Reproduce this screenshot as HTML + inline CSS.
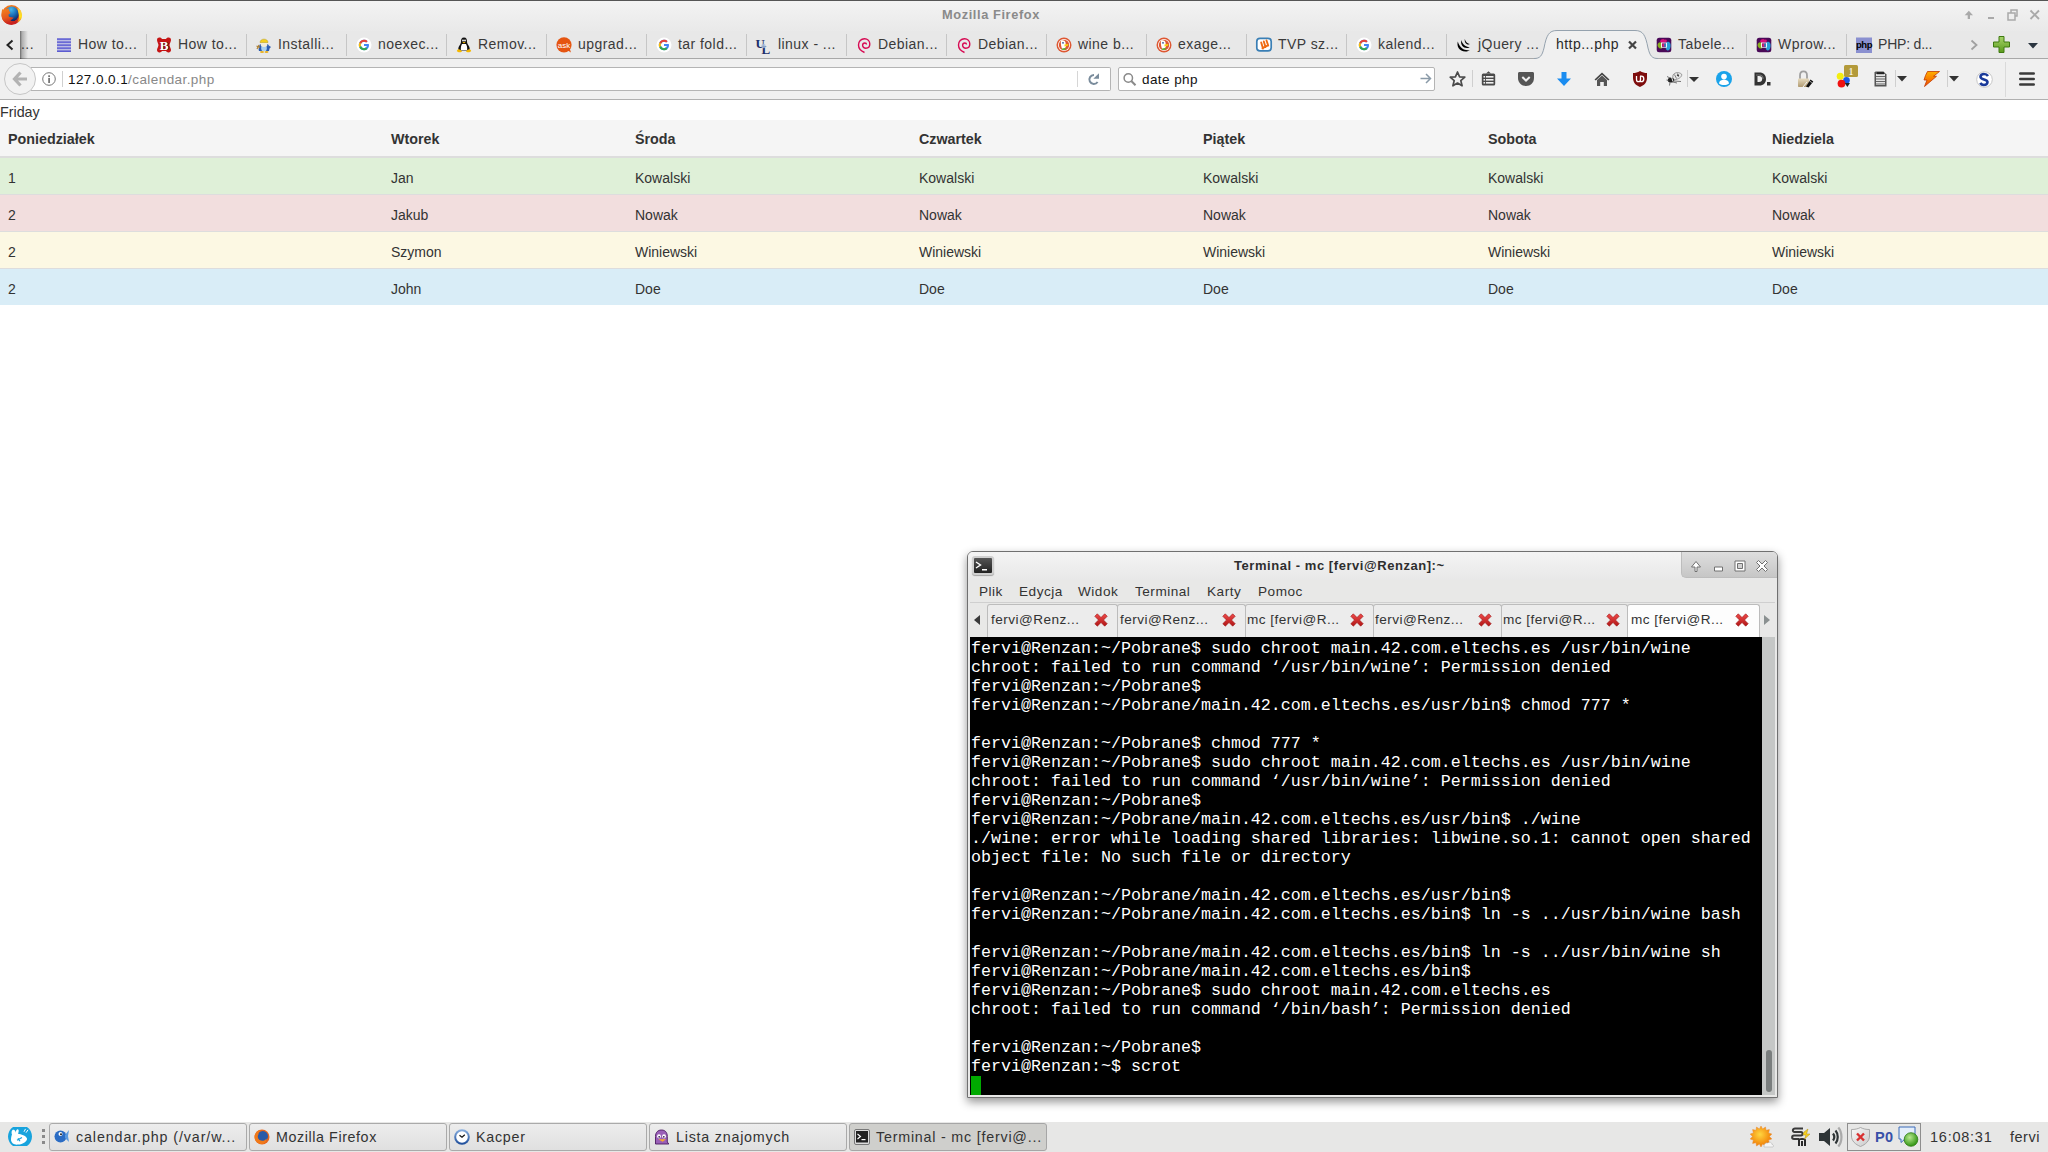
<!DOCTYPE html><html><head><meta charset="utf-8"><style>
*{margin:0;padding:0;box-sizing:border-box}
html,body{width:2048px;height:1152px;overflow:hidden;background:#fff;font-family:"Liberation Sans",sans-serif}
.a{position:absolute}
svg{position:absolute;overflow:visible}
#titlebar{left:0;top:0;width:2048px;height:31px;background:linear-gradient(#f3f3f3,#e9e9e9);border-top:1px solid #555}
#title{left:942px;top:7px;font-weight:bold;font-size:12.8px;letter-spacing:0.6px;color:#8a8a8a;white-space:nowrap}
#tabbar{left:0;top:31px;width:2048px;height:28px;background:#e8e8e8;border-bottom:1px solid #a8a8a8}
.sep{top:34px;width:1px;height:22px;background:#c6c6c6}
.tt{top:36px;font-size:14px;letter-spacing:0.45px;color:#3a3a3a;white-space:nowrap}
#navbar{left:0;top:59px;width:2048px;height:41px;background:#f0f0f0;border-bottom:1px solid #b0b0b0}
.nsep{width:1px;background:#cfcfcf}
#friday{left:0;top:104px;font-size:14.3px;color:#333}
table{position:absolute;left:0;top:120px;width:2048px;border-collapse:collapse;font-size:14.3px;color:#333;table-layout:fixed}
th,td{padding:10px 8px 6px 8px;line-height:20px;text-align:left;vertical-align:top;white-space:nowrap}
th{font-weight:bold;border-bottom:2px solid #ddd;background:#f5f5f5;padding-top:9px;padding-bottom:7px}
td{border-top:1px solid #ddd;font-size:14px}
tr.s td{background:#dff0d8}
tr.d td{background:#f2dede}
tr.w td{background:#fcf8e3}
tr.i td{background:#d9edf7}
#taskbar{left:0;top:1122px;width:2048px;height:30px;background:#e7e7e6}
.tb{top:1123px;height:28px;border:1px solid #aaa;border-radius:3px;background:linear-gradient(#ededed,#e0e0e0);font-size:14.4px;letter-spacing:0.5px;color:#333;white-space:nowrap;padding:5px 0 0 26px}
#term{left:967px;top:551px;width:811px;height:547px;background:#e8e8e7;border:1px solid #707070;border-radius:6px 6px 0 0}
#tscreen{left:970px;top:637px;width:792px;height:458px;background:#000;font-family:"Liberation Mono",monospace;font-size:16.67px;line-height:19px;color:#fff;white-space:pre;padding:2px 0 0 1px;overflow:hidden}
</style></head><body>
<div id="titlebar" class="a"></div>
<svg style="left:1px;top:4px" width="21" height="21" viewBox="0 0 21 21">
<defs><radialGradient id="ffb" cx="0.45" cy="0.2" r="0.8"><stop offset="0" stop-color="#45b8ea"/><stop offset="0.5" stop-color="#1a6fb8"/><stop offset="1" stop-color="#0d1e5a"/></radialGradient>
<linearGradient id="ffo" x1="0" y1="0" x2="0.3" y2="1"><stop offset="0" stop-color="#f5861e"/><stop offset="0.6" stop-color="#e55a1e"/><stop offset="1" stop-color="#c8221e"/></linearGradient>
<linearGradient id="ffy" x1="0" y1="0" x2="0" y2="1"><stop offset="0" stop-color="#f8c048"/><stop offset="0.6" stop-color="#ffe21a"/><stop offset="1" stop-color="#f08a1e"/></linearGradient></defs>
<circle cx="10.5" cy="11" r="10" fill="url(#ffo)"/>
<ellipse cx="10.8" cy="10" rx="7" ry="7.6" fill="url(#ffb)"/>
<path d="M16.5 3.5 C19.5 5 21 8 21 11.5 C21 15 19 17.5 16 18.5 C18 16 18.5 12 17.5 9 C17 7 16.5 5 16.5 3.5Z" fill="url(#ffy)"/>
<path d="M1.3 5 L3 6.5 C5 5 6.5 5 7.8 4.5 C7.5 6.5 9 7.5 9.5 9 L7.5 10.5 L7.8 12.5 C9 13.5 11.5 13 12.8 13.8 C11.5 15 10.5 15.5 9.5 16.5 C12 18 15.5 17 16.5 17.5 C14 20 10 21 6.5 20 C3 18.5 0.5 15 0.5 11 C0.5 8.5 0.8 6.8 1.3 5Z" fill="url(#ffo)"/>
</svg>
<div id="title" class="a">Mozilla Firefox</div>
<svg style="left:1960px;top:8px" width="82" height="14" viewBox="0 0 82 14">
<path d="M4.7 7.3 L8.85 2.8 L13 7.3 L10 7.3 L10 11 L7.7 11 L7.7 7.3Z" fill="#a9a9a9"/>
<rect x="28" y="9" width="6" height="2" fill="#a9a9a9"/>
<rect x="48" y="5" width="7" height="7" stroke="#a9a9a9" stroke-width="1.5" fill="none"/>
<path d="M51 5 V2 H57 V8 H55" stroke="#a9a9a9" stroke-width="1.5" fill="none"/>
<path d="M70.5 2.5 L79 11 M79 2.5 L70.5 11" stroke="#a9a9a9" stroke-width="1.9" fill="none"/>
</svg>
<div id="tabbar" class="a"></div>
<svg style="left:6px;top:40px" width="8" height="10" viewBox="0 0 8 10"><path d="M6.5 0.5 L1.5 5 L6.5 9.5" stroke="#222" stroke-width="2" fill="none"/></svg>
<div class="a" style="left:20px;top:31px;width:8px;height:28px;background:linear-gradient(90deg,rgba(0,0,0,.55),rgba(0,0,0,.25) 25%,rgba(0,0,0,0))"></div>
<div class="a tt" style="left:21px;width:14px;overflow:hidden">...</div>
<div class="a sep" style="left:46px"></div>
<svg style="left:56px;top:37px" width="16" height="16" viewBox="0 0 16 16"><g fill="#2020c8"><rect x="1" y="1.5" width="14" height="1.2"/><rect x="1" y="4.5" width="14" height="1.2"/><rect x="1" y="7.5" width="14" height="1.2"/><rect x="1" y="10.5" width="14" height="1.2"/><rect x="1" y="13.5" width="14" height="1.2"/></g><g fill="#9090e0"><rect x="1" y="2.7" width="14" height="0.8"/><rect x="1" y="5.7" width="14" height="0.8"/><rect x="1" y="8.7" width="14" height="0.8"/><rect x="1" y="11.7" width="14" height="0.8"/></g></svg>
<div class="a tt" style="left:78px">How to...</div>
<div class="a sep" style="left:146px"></div>
<svg style="left:156px;top:37px" width="16" height="16" viewBox="0 0 16 16"><path d="M1 3 C1 0 4.5 -0.2 6 2 L10 2 C11.5 -0.2 15 0 15 3 C15 4.5 14 5.5 13.5 8 C14 10.5 15 11.5 15 13 C15 16 11.5 16.2 10 14 L6 14 C4.5 16.2 1 16 1 13 C1 11.5 2 10.5 2.5 8 C2 5.5 1 4.5 1 3Z" fill="#c51414"/><text x="8.8" y="13.2" font-family="Liberation Serif" font-weight="bold" font-size="13" fill="#111" text-anchor="middle">B</text><text x="8" y="12.5" font-family="Liberation Serif" font-weight="bold" font-size="13" fill="#fff" text-anchor="middle">B</text></svg>
<div class="a tt" style="left:178px">How to...</div>
<div class="a sep" style="left:246px"></div>
<svg style="left:256px;top:37px" width="16" height="16" viewBox="0 0 16 16"><path d="M4 7 C3 10 2 12 3 14 L13 14 C14 12 13 10 12 7Z" fill="#2a5cb0"/><path d="M5.5 9 C5 11 5 12.5 6 14 L10 14 C11 12.5 11 11 10.5 9Z" fill="#a8d0f0"/><ellipse cx="8" cy="7" rx="3.5" ry="3" fill="#f0ecd8"/><path d="M4 5.5 C4 1 12 1 12 5.5Z" fill="#f2cf1c" stroke="#b89a10" stroke-width="0.5"/><path d="M0.5 9 L4 10.5 M1 12 L3 8" stroke="#b08030" stroke-width="1.2"/><ellipse cx="6" cy="15" rx="2" ry="1" fill="#e8b020"/><ellipse cx="10.5" cy="15" rx="2" ry="1" fill="#e8b020"/><path d="M12 8 L15 10 L13 12" fill="#2a5cb0"/></svg>
<div class="a tt" style="left:278px">Installi...</div>
<div class="a sep" style="left:346px"></div>
<svg style="left:356px;top:37px" width="16" height="16" viewBox="0 0 16 16"><circle cx="8" cy="8" r="7.5" fill="#fff"/>
<path d="M12.6 7 H8 V9 H10.8 C10.4 10.4 9.3 11.2 8 11.2 C6.2 11.2 4.8 9.8 4.8 8 C4.8 6.2 6.2 4.8 8 4.8 C8.9 4.8 9.6 5.1 10.2 5.6 L11.6 4.2 C10.7 3.3 9.4 2.8 8 2.8 C5.1 2.8 2.8 5.1 2.8 8 C2.8 10.9 5.1 13.2 8 13.2 C10.9 13.2 13 11.2 13 8 C13 7.6 12.9 7.3 12.6 7Z" fill="#4285f4"/>
<path d="M3.4 5.6 L5.1 6.9 C5.5 5.7 6.6 4.8 8 4.8 C8.9 4.8 9.6 5.1 10.2 5.6 L11.6 4.2 C10.7 3.3 9.4 2.8 8 2.8 C6 2.8 4.3 3.9 3.4 5.6Z" fill="#ea4335"/>
<path d="M3.4 10.4 L5.1 9.1 C4.9 8.8 4.8 8.4 4.8 8 C4.8 7.6 4.9 7.2 5.1 6.9 L3.4 5.6 C3 6.3 2.8 7.1 2.8 8 C2.8 8.9 3 9.7 3.4 10.4Z" fill="#fbbc05"/>
<path d="M8 13.2 C9.4 13.2 10.6 12.7 11.5 11.9 L9.8 10.6 C9.3 11 8.7 11.2 8 11.2 C6.6 11.2 5.5 10.3 5.1 9.1 L3.4 10.4 C4.3 12.1 6 13.2 8 13.2Z" fill="#34a853"/></svg>
<div class="a tt" style="left:378px">noexec...</div>
<div class="a sep" style="left:446px"></div>
<svg style="left:456px;top:37px" width="16" height="16" viewBox="0 0 16 16"><path d="M8 0.5 C5.5 0.5 5 2.5 5 4.5 C5 6 4.5 7 3.5 8.5 C2 10.5 2 13 3 14 L13 14 C14 13 14 10.5 12.5 8.5 C11.5 7 11 6 11 4.5 C11 2.5 10.5 0.5 8 0.5Z" fill="#111"/><path d="M6 7 C5 9 4.5 11 5 13.5 L11 13.5 C11.5 11 11 9 10 7Z" fill="#fff"/><circle cx="7" cy="3.5" r="0.9" fill="#fff"/><circle cx="9" cy="3.5" r="0.9" fill="#fff"/><path d="M6.3 5 L9.7 5 L8 6.5Z" fill="#f5b800"/><path d="M0.8 14 C1.5 11.5 4 11.5 6 14.2 C5.5 15.5 2 15.8 0.8 14Z M15.2 14 C14.5 11.5 12 11.5 10 14.2 C10.5 15.5 14 15.8 15.2 14Z" fill="#f5b800"/></svg>
<div class="a tt" style="left:478px">Remov...</div>
<div class="a sep" style="left:546px"></div>
<svg style="left:556px;top:37px" width="16" height="16" viewBox="0 0 16 16"><circle cx="8" cy="7.8" r="7.6" fill="#e55511"/><path d="M11 13 L15 15.5 L13.5 11Z" fill="#e55511"/><text x="8" y="10.5" font-family="Liberation Sans" font-size="8" fill="#fff" text-anchor="middle">ask</text></svg>
<div class="a tt" style="left:578px">upgrad...</div>
<div class="a sep" style="left:646px"></div>
<svg style="left:656px;top:37px" width="16" height="16" viewBox="0 0 16 16"><circle cx="8" cy="8" r="7.5" fill="#fff"/>
<path d="M12.6 7 H8 V9 H10.8 C10.4 10.4 9.3 11.2 8 11.2 C6.2 11.2 4.8 9.8 4.8 8 C4.8 6.2 6.2 4.8 8 4.8 C8.9 4.8 9.6 5.1 10.2 5.6 L11.6 4.2 C10.7 3.3 9.4 2.8 8 2.8 C5.1 2.8 2.8 5.1 2.8 8 C2.8 10.9 5.1 13.2 8 13.2 C10.9 13.2 13 11.2 13 8 C13 7.6 12.9 7.3 12.6 7Z" fill="#4285f4"/>
<path d="M3.4 5.6 L5.1 6.9 C5.5 5.7 6.6 4.8 8 4.8 C8.9 4.8 9.6 5.1 10.2 5.6 L11.6 4.2 C10.7 3.3 9.4 2.8 8 2.8 C6 2.8 4.3 3.9 3.4 5.6Z" fill="#ea4335"/>
<path d="M3.4 10.4 L5.1 9.1 C4.9 8.8 4.8 8.4 4.8 8 C4.8 7.6 4.9 7.2 5.1 6.9 L3.4 5.6 C3 6.3 2.8 7.1 2.8 8 C2.8 8.9 3 9.7 3.4 10.4Z" fill="#fbbc05"/>
<path d="M8 13.2 C9.4 13.2 10.6 12.7 11.5 11.9 L9.8 10.6 C9.3 11 8.7 11.2 8 11.2 C6.6 11.2 5.5 10.3 5.1 9.1 L3.4 10.4 C4.3 12.1 6 13.2 8 13.2Z" fill="#34a853"/></svg>
<div class="a tt" style="left:678px">tar fold...</div>
<div class="a sep" style="left:746px"></div>
<svg style="left:756px;top:37px" width="16" height="16" viewBox="0 0 16 16"><text x="-0.5" y="10.5" font-family="Liberation Serif" font-weight="bold" font-size="13" fill="#1d2f6a">U</text><text x="5.5" y="16.5" font-family="Liberation Serif" font-weight="bold" font-size="13" fill="#1d2f6a">L</text><circle cx="7.5" cy="9" r="2.2" fill="#a8bedc" opacity=".8"/></svg>
<div class="a tt" style="left:778px">linux - ...</div>
<div class="a sep" style="left:846px"></div>
<svg style="left:856px;top:37px" width="16" height="16" viewBox="0 0 16 16"><path d="M8.5 15.5 C5 14 2.5 11.5 2.5 8 C2.5 4.5 5 1.8 8.5 1.8 C11.5 1.8 13.8 4 13.8 7 C13.8 9.5 12 11.2 9.8 11.2 C8 11.2 6.6 10 6.6 8.3 C6.6 7 7.6 6 8.8 6 C9.8 6 10.5 6.7 10.5 7.5" stroke="#d70a53" stroke-width="1.4" fill="none"/></svg>
<div class="a tt" style="left:878px">Debian...</div>
<div class="a sep" style="left:946px"></div>
<svg style="left:956px;top:37px" width="16" height="16" viewBox="0 0 16 16"><path d="M8.5 15.5 C5 14 2.5 11.5 2.5 8 C2.5 4.5 5 1.8 8.5 1.8 C11.5 1.8 13.8 4 13.8 7 C13.8 9.5 12 11.2 9.8 11.2 C8 11.2 6.6 10 6.6 8.3 C6.6 7 7.6 6 8.8 6 C9.8 6 10.5 6.7 10.5 7.5" stroke="#d70a53" stroke-width="1.4" fill="none"/></svg>
<div class="a tt" style="left:978px">Debian...</div>
<div class="a sep" style="left:1046px"></div>
<svg style="left:1056px;top:37px" width="16" height="16" viewBox="0 0 16 16"><circle cx="8" cy="8" r="7.5" fill="#de5833"/><circle cx="8" cy="8" r="6" fill="#fff"/><circle cx="8" cy="8" r="5.2" fill="#de5833"/>
<path d="M5 3.5 C7 2.8 9 3.5 9.5 5.5 L10 10 L6.5 12.5 C5 10 4.5 6 5 3.5Z" fill="#fff"/>
<path d="M8.5 7.5 L12.5 7 L11.5 9 L8.5 9.5Z" fill="#fdd20a"/><circle cx="7" cy="5.8" r="0.9" fill="#2d4f8e"/>
<path d="M6 11.5 L9.5 11 L9.5 12.8 L6.3 13Z" fill="#4cba3c"/></svg>
<div class="a tt" style="left:1078px">wine b...</div>
<div class="a sep" style="left:1146px"></div>
<svg style="left:1156px;top:37px" width="16" height="16" viewBox="0 0 16 16"><circle cx="8" cy="8" r="7.5" fill="#de5833"/><circle cx="8" cy="8" r="6" fill="#fff"/><circle cx="8" cy="8" r="5.2" fill="#de5833"/>
<path d="M5 3.5 C7 2.8 9 3.5 9.5 5.5 L10 10 L6.5 12.5 C5 10 4.5 6 5 3.5Z" fill="#fff"/>
<path d="M8.5 7.5 L12.5 7 L11.5 9 L8.5 9.5Z" fill="#fdd20a"/><circle cx="7" cy="5.8" r="0.9" fill="#2d4f8e"/>
<path d="M6 11.5 L9.5 11 L9.5 12.8 L6.3 13Z" fill="#4cba3c"/></svg>
<div class="a tt" style="left:1178px">exage...</div>
<div class="a sep" style="left:1246px"></div>
<svg style="left:1256px;top:37px" width="16" height="16" viewBox="0 0 16 16"><rect x="0.8" y="1.3" width="14.4" height="12.6" rx="3.2" fill="#fff" stroke="#3a7fb5" stroke-width="1.7"/><path d="M5.2 5.5 L7 11.5 M7.8 4.5 L9.5 10 M10.5 3.5 L12.2 8.5 M6.5 11.2 L12 8.3" stroke="#f06a12" stroke-width="1.9" stroke-linecap="round" fill="none"/></svg>
<div class="a tt" style="left:1278px">TVP sz...</div>
<div class="a sep" style="left:1346px"></div>
<svg style="left:1356px;top:37px" width="16" height="16" viewBox="0 0 16 16"><circle cx="8" cy="8" r="7.5" fill="#fff"/>
<path d="M12.6 7 H8 V9 H10.8 C10.4 10.4 9.3 11.2 8 11.2 C6.2 11.2 4.8 9.8 4.8 8 C4.8 6.2 6.2 4.8 8 4.8 C8.9 4.8 9.6 5.1 10.2 5.6 L11.6 4.2 C10.7 3.3 9.4 2.8 8 2.8 C5.1 2.8 2.8 5.1 2.8 8 C2.8 10.9 5.1 13.2 8 13.2 C10.9 13.2 13 11.2 13 8 C13 7.6 12.9 7.3 12.6 7Z" fill="#4285f4"/>
<path d="M3.4 5.6 L5.1 6.9 C5.5 5.7 6.6 4.8 8 4.8 C8.9 4.8 9.6 5.1 10.2 5.6 L11.6 4.2 C10.7 3.3 9.4 2.8 8 2.8 C6 2.8 4.3 3.9 3.4 5.6Z" fill="#ea4335"/>
<path d="M3.4 10.4 L5.1 9.1 C4.9 8.8 4.8 8.4 4.8 8 C4.8 7.6 4.9 7.2 5.1 6.9 L3.4 5.6 C3 6.3 2.8 7.1 2.8 8 C2.8 8.9 3 9.7 3.4 10.4Z" fill="#fbbc05"/>
<path d="M8 13.2 C9.4 13.2 10.6 12.7 11.5 11.9 L9.8 10.6 C9.3 11 8.7 11.2 8 11.2 C6.6 11.2 5.5 10.3 5.1 9.1 L3.4 10.4 C4.3 12.1 6 13.2 8 13.2Z" fill="#34a853"/></svg>
<div class="a tt" style="left:1378px">kalend...</div>
<div class="a sep" style="left:1446px"></div>
<svg style="left:1456px;top:37px" width="16" height="16" viewBox="0 0 16 16"><path d="M1.8 4.5 C0.5 9 3 14.5 9.5 14.5 C11.5 14.5 13 13.8 13.8 13 C9.5 14 4 12 1.8 4.5Z" fill="#000"/><path d="M5.3 3 C4.2 7.5 7 11 11 11 C12.3 11 13.2 10.5 13.8 10 C10.5 10.3 6.5 8 5.3 3Z" fill="#000"/><path d="M8.8 2 C8.3 5 10 7.5 12.5 7.5 C13.2 7.5 13.6 7.3 13.8 7 C11.5 6.8 9.5 5 8.8 2Z" fill="#000"/></svg>
<div class="a tt" style="left:1478px">jQuery ...</div>
<svg style="left:1656px;top:37px" width="16" height="16" viewBox="0 0 16 16"><rect x="0.7" y="0.7" width="14.6" height="14.6" rx="2.5" fill="#4a0a58"/><path d="M4 4.5 C5 1.5 8 1.5 9 3 C10 2 11.5 3 10.5 5 L5.5 6Z" fill="#d8107a"/><path d="M1.5 8 C2 5.5 4 4.5 5.5 6 L6 11.5 C4 12 2 11 1.5 8Z" fill="#88b020"/><path d="M10 6 C12 3.5 14 5 14.5 7 C15 10 14 13 12 13.5 C10 13.5 9 11 10 6Z" fill="#2aa0d8"/><rect x="5.5" y="6" width="5" height="4.2" fill="none" stroke="#fff" stroke-width="0.9"/><rect x="6.3" y="6.8" width="2" height="2.6" fill="#d8207a"/><rect x="8.3" y="6.8" width="1.5" height="2.6" fill="#3a8ad0"/></svg>
<div class="a tt" style="left:1678px">Tabele...</div>
<div class="a sep" style="left:1746px"></div>
<svg style="left:1756px;top:37px" width="16" height="16" viewBox="0 0 16 16"><rect x="0.7" y="0.7" width="14.6" height="14.6" rx="2.5" fill="#4a0a58"/><path d="M4 4.5 C5 1.5 8 1.5 9 3 C10 2 11.5 3 10.5 5 L5.5 6Z" fill="#d8107a"/><path d="M1.5 8 C2 5.5 4 4.5 5.5 6 L6 11.5 C4 12 2 11 1.5 8Z" fill="#88b020"/><path d="M10 6 C12 3.5 14 5 14.5 7 C15 10 14 13 12 13.5 C10 13.5 9 11 10 6Z" fill="#2aa0d8"/><rect x="5.5" y="6" width="5" height="4.2" fill="none" stroke="#fff" stroke-width="0.9"/><rect x="6.3" y="6.8" width="2" height="2.6" fill="#d8207a"/><rect x="8.3" y="6.8" width="1.5" height="2.6" fill="#3a8ad0"/></svg>
<div class="a tt" style="left:1778px">Wprow...</div>
<div class="a sep" style="left:1846px"></div>
<svg style="left:1856px;top:37px" width="16" height="16" viewBox="0 0 16 16"><rect x="0" y="0.5" width="16" height="15.5" fill="#8a90d0"/><text x="8" y="11.3" font-family="Liberation Sans" font-weight="bold" font-size="9.5" fill="#000" text-anchor="middle" letter-spacing="-0.5">php</text></svg>
<div class="a tt" style="left:1878px;letter-spacing:-0.2px">PHP: d...</div>
<svg style="left:1534px;top:30px" width="124" height="30" viewBox="0 0 124 30">
<path d="M0 28.5 C6 28.5 8 26 10 18 C12.5 5 15 0.5 23 0.5 L101 0.5 C109 0.5 111.5 5 114 18 C116 26 118 28.5 124 28.5 L124 30 L0 30Z" fill="#f0f0f0"/>
<path d="M0 28.5 C6 28.5 8 26 10 18 C12.5 5 15 0.5 23 0.5 L101 0.5 C109 0.5 111.5 5 114 18 C116 26 118 28.5 124 28.5" fill="none" stroke="#95a2ae" stroke-width="1"/>
</svg>
<div class="a tt" style="left:1556px;color:#2a2a2a">http...php</div>
<svg style="left:1628px;top:41px" width="9" height="8" viewBox="0 0 9 8"><path d="M1 0.5 L8 7.5 M8 0.5 L1 7.5" stroke="#444" stroke-width="2.2"/></svg>
<svg style="left:1970px;top:40px" width="8" height="10" viewBox="0 0 8 10"><path d="M1.5 0.5 L6.5 5 L1.5 9.5" stroke="#a0a0a0" stroke-width="1.8" fill="none"/></svg>
<svg style="left:1993px;top:36px" width="17" height="17" viewBox="0 0 17 17"><defs><linearGradient id="gp" x1="0" y1="0" x2="0" y2="1"><stop offset="0" stop-color="#a6d36a"/><stop offset="1" stop-color="#5a9a1c"/></linearGradient></defs>
<path d="M6 0.5 H11 V6 H16.5 V11 H11 V16.5 H6 V11 H0.5 V6 H6Z" fill="url(#gp)" stroke="#3e7a10" stroke-width="1"/></svg>
<svg style="left:2028px;top:43px" width="10" height="6" viewBox="0 0 10 6"><path d="M0 0 H10 L5 5.5Z" fill="#2a3540"/></svg>
<div id="navbar" class="a"></div>
<div class="a" style="left:31px;top:67px;width:1080px;height:24px;background:#fff;border:1px solid #b4b4b4;border-left:none;border-radius:0 2px 2px 0"></div>
<div class="a" style="left:4px;top:63px;width:32px;height:32px;border-radius:50%;background:#f2f2f2;border:1px solid #c6c6c6"></div>
<svg style="left:13px;top:71px" width="15" height="16" viewBox="0 0 15 16"><path d="M7.5 1.5 L1.5 8 L7.5 14.5 M2 8 H14" stroke="#b3b3b3" stroke-width="3.2" fill="none"/></svg>
<svg style="left:42px;top:72px" width="15" height="15" viewBox="0 0 15 15"><circle cx="7" cy="7" r="6.3" fill="none" stroke="#777" stroke-width="1"/><rect x="6.2" y="6" width="1.8" height="5" fill="#777"/><rect x="6.2" y="3.3" width="1.8" height="1.8" fill="#777"/></svg>
<div class="a nsep" style="left:62px;top:71px;height:16px;background:#d0d0d0"></div>
<div class="a" style="left:68px;top:72px;font-size:13.5px;letter-spacing:0.42px;color:#111;white-space:nowrap">127.0.0.1<span style="color:#888">/calendar.php</span></div>
<div class="a nsep" style="left:1077px;top:71px;height:16px;background:#d6d6d6"></div>
<svg style="left:1087px;top:72px" width="14" height="14" viewBox="0 0 14 14"><path d="M7 3 A4.5 4.5 0 1 0 10.6 10" stroke="#7a8c9c" stroke-width="2" fill="none"/><path d="M12 1.2 V6.8 H6.3Z" fill="#7a8c9c"/></svg>
<div class="a" style="left:1118px;top:67px;width:317px;height:24px;background:#fff;border:1px solid #b4b4b4;border-radius:2px"></div>
<svg style="left:1123px;top:73px" width="14" height="14" viewBox="0 0 14 14"><circle cx="5.3" cy="5" r="4.2" stroke="#8a8a8a" stroke-width="1.5" fill="none"/><path d="M8.3 8 L12.5 12.3" stroke="#8a8a8a" stroke-width="2"/></svg>
<div class="a" style="left:1142px;top:72px;font-size:13.5px;letter-spacing:0.42px;color:#111;white-space:nowrap">date php</div>
<svg style="left:1420px;top:73px" width="12" height="11" viewBox="0 0 12 11"><path d="M0.5 5.5 H10.5 M6 1 L10.5 5.5 L6 10" stroke="#8a9aa8" stroke-width="1.5" fill="none"/></svg>
<svg style="left:1449px;top:71px" width="17" height="16" viewBox="0 0 17 16"><path d="M8.5 1 L10.6 5.8 L15.8 6.2 L11.8 9.6 L13.1 14.8 L8.5 12 L3.9 14.8 L5.2 9.6 L1.2 6.2 L6.4 5.8Z" fill="none" stroke="#4a4a4a" stroke-width="1.7" stroke-linejoin="round"/></svg>
<div class="a nsep" style="left:1472px;top:70px;height:17px"></div>
<svg style="left:1481px;top:71px" width="15" height="15" viewBox="0 0 15 15"><path d="M5 2.5 L7.5 0.3 L10 2.5" fill="#4a4a4a"/><rect x="0.8" y="2.5" width="13.4" height="12" rx="1.5" fill="#4a4a4a"/><g fill="#f0f0f0"><rect x="2.5" y="5" width="1.6" height="1.6"/><rect x="5" y="5" width="7.5" height="1.6"/><rect x="2.5" y="8" width="1.6" height="1.6"/><rect x="5" y="8" width="7.5" height="1.6"/><rect x="2.5" y="11" width="1.6" height="1.6"/><rect x="5" y="11" width="7.5" height="1.6"/></g></svg>
<svg style="left:1518px;top:72px" width="16" height="14" viewBox="0 0 16 14"><path d="M0 1.5 C0 0.5 0.7 0 1.5 0 H14.5 C15.3 0 16 0.5 16 1.5 V6 C16 10.5 12.5 14 8 14 C3.5 14 0 10.5 0 6Z" fill="#555"/><path d="M4.3 5 L8 8.5 L11.7 5" stroke="#f0f0f0" stroke-width="2" fill="none"/></svg>
<svg style="left:1557px;top:72px" width="14" height="14" viewBox="0 0 14 14"><path d="M4.5 0 H9.5 V6.5 H14 L7 14 L0 6.5 H4.5Z" fill="#1a8cf0"/></svg>
<svg style="left:1594px;top:72px" width="16" height="14" viewBox="0 0 16 14"><path d="M8 0.5 L15.5 7.5 L14.2 8.5 L8 2.8 L1.8 8.5 L0.5 7.5Z" fill="#444"/><path d="M3 8 L8 3.5 L13 8 V14 H9.8 V10 H6.2 V14 H3Z" fill="#555"/></svg>
<svg style="left:1633px;top:71px" width="14" height="16" viewBox="0 0 14 16"><path d="M7 0 C9.5 1.5 11.5 2 14 2 V7 C14 11.5 11 14.5 7 16 C3 14.5 0 11.5 0 7 V2 C2.5 2 4.5 1.5 7 0Z" fill="#7e0d0d"/><path d="M3.5 5 V8.5 C3.5 10 4.3 10.7 5.5 10.7 C6.7 10.7 7.5 10 7.5 8.5 V5 M7 5.2 H8.2 C10 5.2 10.8 6.5 10.8 8 C10.8 9.5 10 10.7 8.2 10.7 H7.2" stroke="#fff" stroke-width="1.3" fill="none"/></svg>
<svg style="left:1666px;top:72px" width="17" height="14" viewBox="0 0 17 14"><path d="M7 3 C9 0 13 0 15.5 2 C16.5 4 14 6.5 10 7.5 L6.5 8Z" fill="#e8e8e8" stroke="#777" stroke-width="0.7"/><path d="M8.5 2.5 L10.5 6.5 M11.5 1.5 L12.5 5" stroke="#555" stroke-width="0.7"/><ellipse cx="5" cy="8" rx="3.2" ry="2.6" fill="#222"/><ellipse cx="12" cy="3.2" rx="1.2" ry="0.8" fill="#333"/><path d="M1 4.5 L4 6 M0.5 8 L2.5 8.5 M4 10.5 L3.5 13.5 M8 9 L15 9.5 M7 10 L11 11" stroke="#555" stroke-width="0.8"/><path d="M5.5 5 L7 9.5" stroke="#fff" stroke-width="0.9"/></svg>
<div class="a nsep" style="left:1687px;top:70px;height:17px"></div>
<svg style="left:1689px;top:77px" width="10" height="5" viewBox="0 0 10 5"><path d="M0 0 H10 L5 5Z" fill="#333"/></svg>
<svg style="left:1716px;top:71px" width="16" height="16" viewBox="0 0 16 16"><circle cx="8" cy="8" r="8" fill="#1aa3ea"/><circle cx="8" cy="5.6" r="2.8" fill="#fff"/><path d="M3 12.5 C3.5 9.5 5.5 8.8 8 8.8 C10.5 8.8 12.5 9.5 13 12.5 C11.5 13.7 10 14 8 14 C6 14 4.5 13.7 3 12.5Z" fill="#fff"/></svg>
<svg style="left:1754px;top:72px" width="17" height="14" viewBox="0 0 17 14"><path d="M0.5 0.5 H5.5 C9.5 0.5 12 3 12 7 C12 11 9.5 13.5 5.5 13.5 H0.5 V10 H5 C7 10 8.2 8.8 8.2 7 C8.2 5.2 7 4 5 4 H3.5 V10 H0.5Z" fill="#333"/><path d="M2 3 H5 C7.5 3 9 4.8 9 7" stroke="#777" stroke-width="1.2" fill="none"/><rect x="13" y="10" width="3.5" height="3.5" fill="#333"/></svg>
<svg style="left:1797px;top:70px" width="17" height="18" viewBox="0 0 17 18"><defs><linearGradient id="lk" x1="0" y1="0" x2="0" y2="1"><stop offset="0" stop-color="#e8dcc0"/><stop offset="1" stop-color="#b09a70"/></linearGradient></defs><path d="M3 9 V5.5 C3 2.8 4.6 1.3 6.5 1.3 C8.4 1.3 10 2.8 10 5.5 V9" stroke="#a0a0a0" stroke-width="1.8" fill="none"/><rect x="1" y="8.5" width="11" height="8.5" rx="0.8" fill="url(#lk)"/><path d="M9 16.5 L13.5 9.5 L16.3 11.5 L11.5 17.5Z" fill="#111"/><path d="M12.5 11 L14.8 12.6" stroke="#ddd" stroke-width="0.8"/><path d="M6 17 L10 12" stroke="#f4f4f4" stroke-width="1"/></svg>
<svg style="left:1836px;top:65px" width="23" height="23" viewBox="0 0 23 23"><circle cx="4.2" cy="11.3" r="3.5" fill="#f4ee10"/><circle cx="10.5" cy="15.2" r="3.3" fill="#1a5ae8"/><circle cx="5.5" cy="18.6" r="3.9" fill="#f01010"/><path d="M8.7 18 H14 L11.35 22Z" fill="#222"/>
<rect x="8" y="0" width="14" height="12" rx="1.5" fill="#b39a3a"/><text x="15" y="10" font-family="Liberation Serif" font-size="11" fill="#fff" text-anchor="middle">1</text></svg>
<svg style="left:1874px;top:71px" width="13" height="16" viewBox="0 0 13 16"><path d="M1.5 0.5 H9.5 L12.5 3.5 V15.5 H0.5 V1.5Z" fill="#555" /><rect x="2" y="3" width="9" height="11" fill="#e4e4e4"/><g stroke="#666" stroke-width="1"><path d="M2 5.5 H11 M2 8 H11 M2 10.5 H11 M2 13 H11"/></g><rect x="3" y="1.2" width="7" height="2" fill="#222"/></svg>
<div class="a nsep" style="left:1895px;top:70px;height:17px"></div>
<svg style="left:1897px;top:76px" width="10" height="6" viewBox="0 0 10 6"><path d="M0 0 H10 L5 5.5Z" fill="#333"/></svg>
<svg style="left:1923px;top:71px" width="17" height="16" viewBox="0 0 17 16"><defs><linearGradient id="lg" x1="0" y1="0" x2="0" y2="1"><stop offset="0" stop-color="#ffb000"/><stop offset="1" stop-color="#f04a00"/></linearGradient></defs>
<path d="M4.5 0.5 H16.5 L10.5 5.3 H13.5 L1.5 15.5 L4 9 H1 L2.5 4.5Z" fill="url(#lg)" stroke="#c03800" stroke-width="0.8" stroke-linejoin="round"/></svg>
<div class="a nsep" style="left:1947px;top:70px;height:17px"></div>
<svg style="left:1949px;top:76px" width="10" height="6" viewBox="0 0 10 6"><path d="M0 0 H10 L5 5.5Z" fill="#333"/></svg>
<svg style="left:1976px;top:71px" width="17" height="17" viewBox="0 0 17 17"><circle cx="8.5" cy="8.5" r="7.8" fill="#fff" stroke="#bbb" stroke-width="0.8"/><path d="M12 5 C11 3.5 9.5 3 8 3 C5.8 3 4.5 4.2 4.5 5.8 C4.5 9 11.5 7.8 11.5 11 C11.5 12.8 10 14 8 14 C6.3 14 5 13.3 4.2 12" stroke="#1a3a9a" stroke-width="2.6" fill="none"/></svg>
<div class="a nsep" style="left:2005px;top:62px;height:35px;background:#dadada"></div>
<svg style="left:2019px;top:72px" width="16" height="14" viewBox="0 0 16 14"><g stroke="#3a3a3a" stroke-width="2.6" stroke-linecap="round"><path d="M1.3 1.5 H14.7 M1.3 7 H14.7 M1.3 12.5 H14.7"/></g></svg>
<div id="friday" class="a">Friday</div>
<table>
<colgroup><col style="width:383px"><col style="width:244px"><col style="width:284px"><col style="width:284px"><col style="width:285px"><col style="width:284px"><col></colgroup>
<tr><th>Poniedziałek</th><th>Wtorek</th><th>Środa</th><th>Czwartek</th><th>Piątek</th><th>Sobota</th><th>Niedziela</th></tr>
<tr class="s"><td>1</td><td>Jan</td><td>Kowalski</td><td>Kowalski</td><td>Kowalski</td><td>Kowalski</td><td>Kowalski</td></tr>
<tr class="d"><td>2</td><td>Jakub</td><td>Nowak</td><td>Nowak</td><td>Nowak</td><td>Nowak</td><td>Nowak</td></tr>
<tr class="w"><td>2</td><td>Szymon</td><td>Winiewski</td><td>Winiewski</td><td>Winiewski</td><td>Winiewski</td><td>Winiewski</td></tr>
<tr class="i"><td>2</td><td>John</td><td>Doe</td><td>Doe</td><td>Doe</td><td>Doe</td><td>Doe</td></tr>
</table>
<div class="a" style="left:967px;top:551px;width:811px;height:547px;border-radius:6px 6px 0 0;box-shadow:0 4px 10px rgba(0,0,0,.42)"></div>
<div id="term" class="a"></div>
<div class="a" style="left:968px;top:552px;width:809px;height:28px;border-radius:5px 5px 0 0;background:linear-gradient(#f4f4f4,#e8e8e8)"></div>
<div class="a" style="left:972px;top:556px;width:22px;height:19px;border-radius:3px;background:#d0d0d0;box-shadow:0 1px 1px rgba(0,0,0,.3)"></div>
<div class="a" style="left:974px;top:558px;width:18px;height:15px;border-radius:1px;background:linear-gradient(#555,#222)"></div>
<svg style="left:975px;top:561px" width="14" height="11" viewBox="0 0 14 11"><path d="M1 1 L5.5 4 L1 7" stroke="#fff" stroke-width="1.4" fill="none"/><rect x="7" y="8" width="5" height="1.5" fill="#fff"/></svg>
<div class="a" style="left:1234px;top:558px;font-weight:bold;font-size:13px;letter-spacing:0.55px;color:#2e2e2e;white-space:nowrap">Terminal - mc [fervi@Renzan]:~</div>
<div class="a" style="left:1681px;top:552px;width:96px;height:26px;border-radius:0 5px 0 5px;background:linear-gradient(#dedede,#c6c6c6);border-left:1px solid #bdbdbd;border-bottom:1px solid #bdbdbd"></div>
<svg style="left:1690px;top:560px" width="80" height="13" viewBox="0 0 80 13">
<g fill="#fff" stroke="#707070" stroke-width="1" stroke-linejoin="round">
<path d="M5 11.5 V7 H1.5 L6 1.5 L10.5 7 H7 V11.5Z"/>
<rect x="24.5" y="7" width="8" height="4"/>
<path d="M45 1 H55 V11 H45Z M47.5 3.5 V8.5 H52.5 V3.5Z" fill-rule="evenodd"/>
<path d="M66.5 2.5 L68.5 0.5 L72 4 L75.5 0.5 L77.5 2.5 L74 6 L77.5 9.5 L75.5 11.5 L72 8 L68.5 11.5 L66.5 9.5 L70 6Z"/>
</g></svg>
<div class="a" style="left:979px;top:584px;font-size:13.6px;letter-spacing:0.5px;color:#333;white-space:nowrap">Plik</div>
<div class="a" style="left:1019px;top:584px;font-size:13.6px;letter-spacing:0.5px;color:#333;white-space:nowrap">Edycja</div>
<div class="a" style="left:1078px;top:584px;font-size:13.6px;letter-spacing:0.5px;color:#333;white-space:nowrap">Widok</div>
<div class="a" style="left:1135px;top:584px;font-size:13.6px;letter-spacing:0.5px;color:#333;white-space:nowrap">Terminal</div>
<div class="a" style="left:1207px;top:584px;font-size:13.6px;letter-spacing:0.5px;color:#333;white-space:nowrap">Karty</div>
<div class="a" style="left:1258px;top:584px;font-size:13.6px;letter-spacing:0.5px;color:#333;white-space:nowrap">Pomoc</div>
<div class="a" style="left:970px;top:602px;width:805px;height:1px;background:#cfcfcf"></div>
<svg style="left:973px;top:615px" width="8" height="10" viewBox="0 0 8 10"><path d="M7 0 V10 L1 5Z" fill="#3a3a3a"/></svg>
<svg style="left:1763px;top:615px" width="8" height="10" viewBox="0 0 8 10"><path d="M1 0 V10 L7 5Z" fill="#8a9090"/></svg>
<div class="a" style="left:987px;top:604px;width:131px;height:34px;background:#ececec;border:1px solid #bcbcbc;border-bottom:none;border-radius:3px 3px 0 0"></div>
<div class="a" style="left:991px;top:612px;font-size:13.6px;letter-spacing:0.45px;color:#333;white-space:nowrap">fervi@Renz...</div>
<svg style="left:1094px;top:613px" width="14" height="14" viewBox="0 0 14 14"><defs><linearGradient id="xr0" x1="0" y1="0" x2="0" y2="1"><stop offset="0" stop-color="#ef4a4a"/><stop offset="1" stop-color="#b01515"/></linearGradient></defs><path d="M0.8 3.3 L3.3 0.8 L7 4.5 L10.7 0.8 L13.2 3.3 L9.5 7 L13.2 10.7 L10.7 13.2 L7 9.5 L3.3 13.2 L0.8 10.7 L4.5 7Z" fill="url(#xr0)" stroke="#9a1010" stroke-width="0.6" stroke-linejoin="round"/></svg>
<div class="a" style="left:1117px;top:604px;width:129px;height:34px;background:#ececec;border:1px solid #bcbcbc;border-bottom:none;border-radius:3px 3px 0 0"></div>
<div class="a" style="left:1120px;top:612px;font-size:13.6px;letter-spacing:0.45px;color:#333;white-space:nowrap">fervi@Renz...</div>
<svg style="left:1222px;top:613px" width="14" height="14" viewBox="0 0 14 14"><defs><linearGradient id="xr1" x1="0" y1="0" x2="0" y2="1"><stop offset="0" stop-color="#ef4a4a"/><stop offset="1" stop-color="#b01515"/></linearGradient></defs><path d="M0.8 3.3 L3.3 0.8 L7 4.5 L10.7 0.8 L13.2 3.3 L9.5 7 L13.2 10.7 L10.7 13.2 L7 9.5 L3.3 13.2 L0.8 10.7 L4.5 7Z" fill="url(#xr1)" stroke="#9a1010" stroke-width="0.6" stroke-linejoin="round"/></svg>
<div class="a" style="left:1245px;top:604px;width:129px;height:34px;background:#ececec;border:1px solid #bcbcbc;border-bottom:none;border-radius:3px 3px 0 0"></div>
<div class="a" style="left:1247px;top:612px;font-size:13.6px;letter-spacing:0.45px;color:#333;white-space:nowrap">mc [fervi@R...</div>
<svg style="left:1350px;top:613px" width="14" height="14" viewBox="0 0 14 14"><defs><linearGradient id="xr2" x1="0" y1="0" x2="0" y2="1"><stop offset="0" stop-color="#ef4a4a"/><stop offset="1" stop-color="#b01515"/></linearGradient></defs><path d="M0.8 3.3 L3.3 0.8 L7 4.5 L10.7 0.8 L13.2 3.3 L9.5 7 L13.2 10.7 L10.7 13.2 L7 9.5 L3.3 13.2 L0.8 10.7 L4.5 7Z" fill="url(#xr2)" stroke="#9a1010" stroke-width="0.6" stroke-linejoin="round"/></svg>
<div class="a" style="left:1373px;top:604px;width:129px;height:34px;background:#ececec;border:1px solid #bcbcbc;border-bottom:none;border-radius:3px 3px 0 0"></div>
<div class="a" style="left:1375px;top:612px;font-size:13.6px;letter-spacing:0.45px;color:#333;white-space:nowrap">fervi@Renz...</div>
<svg style="left:1478px;top:613px" width="14" height="14" viewBox="0 0 14 14"><defs><linearGradient id="xr3" x1="0" y1="0" x2="0" y2="1"><stop offset="0" stop-color="#ef4a4a"/><stop offset="1" stop-color="#b01515"/></linearGradient></defs><path d="M0.8 3.3 L3.3 0.8 L7 4.5 L10.7 0.8 L13.2 3.3 L9.5 7 L13.2 10.7 L10.7 13.2 L7 9.5 L3.3 13.2 L0.8 10.7 L4.5 7Z" fill="url(#xr3)" stroke="#9a1010" stroke-width="0.6" stroke-linejoin="round"/></svg>
<div class="a" style="left:1501px;top:604px;width:127px;height:34px;background:#ececec;border:1px solid #bcbcbc;border-bottom:none;border-radius:3px 3px 0 0"></div>
<div class="a" style="left:1503px;top:612px;font-size:13.6px;letter-spacing:0.45px;color:#333;white-space:nowrap">mc [fervi@R...</div>
<svg style="left:1606px;top:613px" width="14" height="14" viewBox="0 0 14 14"><defs><linearGradient id="xr4" x1="0" y1="0" x2="0" y2="1"><stop offset="0" stop-color="#ef4a4a"/><stop offset="1" stop-color="#b01515"/></linearGradient></defs><path d="M0.8 3.3 L3.3 0.8 L7 4.5 L10.7 0.8 L13.2 3.3 L9.5 7 L13.2 10.7 L10.7 13.2 L7 9.5 L3.3 13.2 L0.8 10.7 L4.5 7Z" fill="url(#xr4)" stroke="#9a1010" stroke-width="0.6" stroke-linejoin="round"/></svg>
<div class="a" style="left:1627px;top:604px;width:133px;height:34px;background:#fdfdfd;border:1px solid #bcbcbc;border-bottom:none;border-radius:3px 3px 0 0"></div>
<div class="a" style="left:1631px;top:612px;font-size:13.6px;letter-spacing:0.45px;color:#333;white-space:nowrap">mc [fervi@R...</div>
<svg style="left:1735px;top:613px" width="14" height="14" viewBox="0 0 14 14"><defs><linearGradient id="xr5" x1="0" y1="0" x2="0" y2="1"><stop offset="0" stop-color="#ef4a4a"/><stop offset="1" stop-color="#b01515"/></linearGradient></defs><path d="M0.8 3.3 L3.3 0.8 L7 4.5 L10.7 0.8 L13.2 3.3 L9.5 7 L13.2 10.7 L10.7 13.2 L7 9.5 L3.3 13.2 L0.8 10.7 L4.5 7Z" fill="url(#xr5)" stroke="#9a1010" stroke-width="0.6" stroke-linejoin="round"/></svg>
<div class="a" style="left:1762px;top:637px;width:13px;height:458px;background:#c5c7c6"></div>
<div class="a" style="left:1766px;top:1050px;width:6px;height:42px;border-radius:3px;background:#7a7e7e"></div>
<div id="tscreen" class="a">fervi@Renzan:~/Pobrane$ sudo chroot main.42.com.eltechs.es /usr/bin/wine
chroot: failed to run command ‘/usr/bin/wine’: Permission denied
fervi@Renzan:~/Pobrane$
fervi@Renzan:~/Pobrane/main.42.com.eltechs.es/usr/bin$ chmod 777 *

fervi@Renzan:~/Pobrane$ chmod 777 *
fervi@Renzan:~/Pobrane$ sudo chroot main.42.com.eltechs.es /usr/bin/wine
chroot: failed to run command ‘/usr/bin/wine’: Permission denied
fervi@Renzan:~/Pobrane$
fervi@Renzan:~/Pobrane/main.42.com.eltechs.es/usr/bin$ ./wine
./wine: error while loading shared libraries: libwine.so.1: cannot open shared
object file: No such file or directory

fervi@Renzan:~/Pobrane/main.42.com.eltechs.es/usr/bin$
fervi@Renzan:~/Pobrane/main.42.com.eltechs.es/bin$ ln -s ../usr/bin/wine bash

fervi@Renzan:~/Pobrane/main.42.com.eltechs.es/bin$ ln -s ../usr/bin/wine sh
fervi@Renzan:~/Pobrane/main.42.com.eltechs.es/bin$
fervi@Renzan:~/Pobrane$ sudo chroot main.42.com.eltechs.es
chroot: failed to run command ‘/bin/bash’: Permission denied

fervi@Renzan:~/Pobrane$
fervi@Renzan:~$ scrot
<span style="display:inline-block;width:10px;height:19px;background:#0a0;vertical-align:top"></span></div>
<div id="taskbar" class="a"></div>
<svg style="left:8px;top:1127px" width="24" height="19" viewBox="0 0 24 20" preserveAspectRatio="none"><path d="M5 0 H19 C22 2 24 6 24 10 C24 14 22 18 19 20 H5 C2 18 0 14 0 10 C0 6 2 2 5 0Z" fill="#17a3dd"/>
<path d="M4 8 C3 5 4 2 6 3 C7 3.5 7.5 5 7.5 6 C8 3 9.5 1.5 10.5 3 C11 4 10.5 6 10 7 C13 7.5 18 9 19 12 C19.5 15 15 18 10 18.5 C6 19 3.5 17 3 14 C3 11 3.5 9.5 4 8Z" fill="#fff"/>
<path d="M9 14 L14 11 M10 12 L12 15" stroke="#17a3dd" stroke-width="1.2"/><path d="M16 5 L17.5 2 M18 6 L20 3" stroke="#fff" stroke-width="1"/></svg>
<svg style="left:42px;top:1129px" width="4" height="15" viewBox="0 0 4 15"><g fill="#8a8a8a"><rect x="0" y="0" width="3" height="3"/><rect x="0" y="6" width="3" height="3"/><rect x="0" y="12" width="3" height="3"/></g></svg>
<div class="a tb" style="left:49px;width:198px"></div>
<svg style="left:54px;top:1129px" width="16" height="16" viewBox="0 0 16 16"><ellipse cx="6.5" cy="7.5" rx="6" ry="6" fill="#2a6cc4"/><path d="M11 6 L15 1 L14 7 L15 13 L11 9Z" fill="#5a9ae0"/><circle cx="6.5" cy="5" r="2" fill="#fff"/><circle cx="7" cy="5.2" r="1" fill="#222"/></svg>
<div class="a" style="left:76px;top:1129px;font-size:14.3px;letter-spacing:0.88px;color:#333;white-space:nowrap">calendar.php (/var/w...</div>
<div class="a tb" style="left:249px;width:198px"></div>
<svg style="left:254px;top:1129px" width="16" height="16" viewBox="0 0 16 16"><circle cx="8" cy="8" r="7.5" fill="#e8661c"/><circle cx="8.8" cy="7.3" r="5.2" fill="#2a5aa8"/><path d="M0.8 6.5 C1.8 2 5 0.5 7 1.5 C5 2.5 4 4 4.5 5.5 C3 6.5 3.5 10 5.5 11 C8 12.5 11 11.8 12.5 9.5 C13 13 9.5 15.5 6.5 15 C2.5 14 0 10.5 0.8 6.5Z" fill="#f07a1a"/></svg>
<div class="a" style="left:276px;top:1129px;font-size:14.3px;letter-spacing:0.58px;color:#333;white-space:nowrap">Mozilla Firefox</div>
<div class="a tb" style="left:449px;width:198px"></div>
<svg style="left:454px;top:1129px" width="16" height="16" viewBox="0 0 16 16"><defs><linearGradient id="clk" x1="0" y1="0" x2="0" y2="1"><stop offset="0" stop-color="#8ab0e0"/><stop offset="1" stop-color="#1a4a98"/></linearGradient></defs><circle cx="8" cy="8" r="7.8" fill="url(#clk)"/><circle cx="8" cy="8" r="5.8" fill="#fff"/><path d="M5.5 6.3 L8 8.3 L10.8 5.8" stroke="#111" stroke-width="1.2" fill="none"/></svg>
<div class="a" style="left:476px;top:1129px;font-size:14.3px;letter-spacing:0.73px;color:#333;white-space:nowrap">Kacper</div>
<div class="a tb" style="left:649px;width:198px"></div>
<svg style="left:654px;top:1129px" width="16" height="16" viewBox="0 0 16 16"><path d="M1.5 15 V7.5 C1.5 3.2 4 1 7.5 1 C11 1 13.3 3.2 13.3 7.5 V13 L14.8 15Z" fill="#9a60b8" stroke="#4a1a60" stroke-width="0.9"/><ellipse cx="5" cy="7.3" rx="1.9" ry="2.1" fill="#fff"/><ellipse cx="10" cy="7.3" rx="1.9" ry="2.1" fill="#fff"/><circle cx="5.2" cy="7.8" r="0.9" fill="#3a2050"/><circle cx="9.8" cy="7.8" r="0.9" fill="#3a2050"/><path d="M4.3 10.2 H12 L8.6 12.8Z" fill="#f8a830"/></svg>
<div class="a" style="left:676px;top:1129px;font-size:14.3px;letter-spacing:0.77px;color:#333;white-space:nowrap">Lista znajomych</div>
<div class="a tb" style="left:849px;width:198px;background:#cfcfcc;border-color:#a6a6a6"></div>
<svg style="left:854px;top:1129px" width="16" height="16" viewBox="0 0 16 16"><rect x="0.5" y="0.5" width="15" height="15" rx="1.5" fill="#ddd" stroke="#777" stroke-width="1"/><rect x="2" y="2" width="12" height="11.5" fill="#222"/><path d="M3.5 5 L6.5 7.5 L3.5 10" stroke="#fff" stroke-width="1.1" fill="none"/><rect x="7.5" y="10" width="4" height="1.2" fill="#fff"/></svg>
<div class="a" style="left:876px;top:1129px;font-size:14.3px;letter-spacing:0.78px;color:#333;white-space:nowrap">Terminal - mc [fervi@...</div>
<svg style="left:1750px;top:1126px" width="24" height="21" viewBox="0 0 24 21"><defs><radialGradient id="sun" cx="0.45" cy="0.4" r="0.6"><stop offset="0" stop-color="#ffd640"/><stop offset="1" stop-color="#f07800"/></radialGradient></defs>
<path d="M11 0 L12.6 3 L15.5 1 L16 4.3 L19.4 3.6 L18.6 7 L21.8 8 L19.5 10.5 L21.8 13 L18.6 14 L19.4 17.4 L16 16.7 L15.5 20 L12.6 18 L11 21 L9.4 18 L6.5 20 L6 16.7 L2.6 17.4 L3.4 14 L0.2 13 L2.5 10.5 L0.2 8 L3.4 7 L2.6 3.6 L6 4.3 L6.5 1 L9.4 3Z" fill="url(#sun)" stroke="#e88a30" stroke-width="0.5"/>
<path d="M14 20 C14 17.5 16 16.5 18 17 C19 15.5 22 16 22 18.5 C23.5 18.5 24 20 23 21 H14Z" fill="#f4f4f4" stroke="#aaa" stroke-width="0.5"/></svg>
<svg style="left:1791px;top:1127px" width="20" height="19" viewBox="0 0 20 19"><path d="M12 1.5 H4 C1.5 1.5 1 5 3.5 5 H10 C12 5 12 8.5 10 8.5 H3 C0.5 8.5 0.5 12 3 12 H8" stroke="#3a3a3a" stroke-width="2" fill="none"/>
<path d="M8 19 V13 C8 11.5 14 11.5 14 13 V19 M11 19 V14" stroke="#2a2a2a" stroke-width="2" fill="none"/><path d="M13 5 L17 2 L15.5 7 L19 7 L13.5 12 L15 8 L12 8Z" fill="#f8d020" stroke="#b09010" stroke-width="0.5"/></svg>
<svg style="left:1819px;top:1126px" width="23" height="22" viewBox="0 0 23 22"><path d="M0 7 H5 L11 2 V20 L5 15 H0Z" fill="#2e3436"/>
<path d="M14 7.5 C15.5 9.5 15.5 12.5 14 14.5" stroke="#2e3436" stroke-width="2.2" fill="none"/><path d="M16.5 4.5 C19.5 8 19.5 14 16.5 17.5" stroke="#2e3436" stroke-width="2.2" fill="none"/><path d="M19.3 1.5 C23.5 6.5 23.5 15.5 19.3 20.5" stroke="#aaa" stroke-width="2.2" fill="none"/></svg>
<div class="a" style="left:1847px;top:1123px;width:74px;height:28px;border:1px solid #8e8e8e"></div>
<svg style="left:1851px;top:1127px" width="19" height="20" viewBox="0 0 19 20"><defs><linearGradient id="shd" x1="0" y1="0" x2="1" y2="1"><stop offset="0" stop-color="#fafafa"/><stop offset="1" stop-color="#c8c8c8"/></linearGradient></defs>
<path d="M9.5 0.5 C12.5 2 15 2.5 18.5 2.5 V9 C18.5 14 14.5 17.5 9.5 19.5 C4.5 17.5 0.5 14 0.5 9 V2.5 C4 2.5 6.5 2 9.5 0.5Z" fill="url(#shd)" stroke="#999" stroke-width="0.8"/>
<path d="M6 6.5 L13 13.5 M13 6.5 L6 13.5" stroke="#d83030" stroke-width="2.4"/></svg>
<div class="a" style="left:1875px;top:1129px;font-size:14.5px;font-weight:bold;color:#3850a8;white-space:nowrap;letter-spacing:0.3px">P0</div>
<svg style="left:1898px;top:1126px" width="21" height="21" viewBox="0 0 21 21"><path d="M1 1 H17 V13 H7 L3 16.5 V13 H1Z" fill="#e4eefa" stroke="#3a6ab8" stroke-width="1"/>
<defs><radialGradient id="gd" cx="0.4" cy="0.35" r="0.6"><stop offset="0" stop-color="#b8e890"/><stop offset="1" stop-color="#3a9a1a"/></radialGradient></defs><circle cx="13" cy="13.5" r="6.8" fill="url(#gd)" stroke="#2a7a10" stroke-width="0.8"/></svg>
<div class="a" style="left:1930px;top:1129px;font-size:14.5px;letter-spacing:0.75px;color:#333;white-space:nowrap">16:08:31</div>
<div class="a" style="left:2010px;top:1129px;font-size:14.5px;letter-spacing:0.5px;color:#333;white-space:nowrap">fervi</div>
</body></html>
